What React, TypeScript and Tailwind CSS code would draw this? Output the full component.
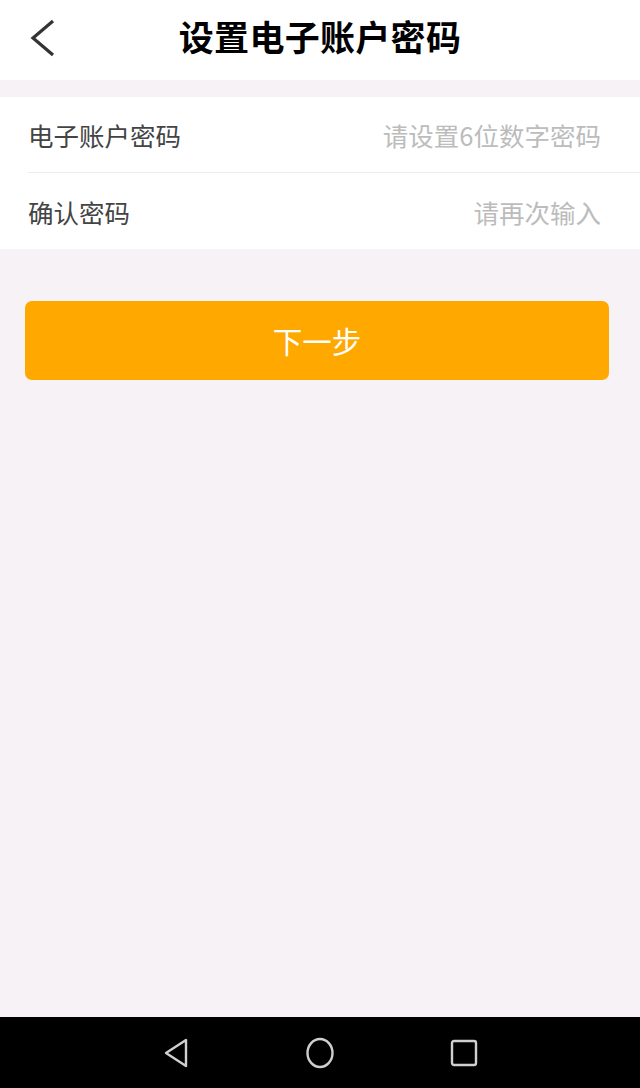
import React from "react";

const cjk = { fontFamily: '"Noto Sans CJK SC", "Noto Sans", sans-serif' };

function Row({ label, placeholder, divider }: { label: string; placeholder: string; divider?: boolean }) {
  return (
    <div className={`flex h-[76px] items-center justify-between ml-[28px] pr-[39px] pt-[2px] ${divider ? "border-b border-[#ececec]" : ""}`}>
      <span className="text-[25.5px] text-[#444444]">{label}</span>
      <input
        type="password"
        placeholder={placeholder}
        className="w-[320px] text-right text-[25.5px] outline-none bg-transparent placeholder:text-[#bcbcbc]"
        style={cjk}
      />
    </div>
  );
}

export default function App() {
  return (
    <div className="w-[640px] h-[1088px] flex flex-col bg-[#f7f2f6]" style={cjk}>
      {/* header */}
      <div className="relative h-[80px] bg-white flex items-center justify-center">
        <svg className="absolute left-[28px] top-[19px]" width="30" height="38" viewBox="0 0 30 38">
          <path d="M25 2 L5 19 L25 36" fill="none" stroke="#333" strokeWidth="3.2" />
        </svg>
        <h1 className="text-[35px] font-bold text-black tracking-[0.3px] -mt-[7px]">设置电子账户密码</h1>
      </div>

      {/* form */}
      <div className="mt-[17px] bg-white">
        <Row label="电子账户密码" placeholder="请设置6位数字密码" divider />
        <Row label="确认密码" placeholder="请再次输入" />
      </div>

      {/* button */}
      <div className="px-[25px] pt-[52px]">
        <button className="w-[584px] h-[79px] rounded-[7px] bg-[#ffa800] text-white text-[29.5px]">下一步</button>
      </div>

      <div className="flex-1" />

      {/* nav bar */}
      <div className="h-[71px] bg-black flex items-center justify-center gap-[115px]">
        <svg width="28" height="32" viewBox="0 0 28 32">
          <path d="M24 3 L24 29 L4 16 Z" fill="none" stroke="#cfcfcf" strokeWidth="2.4" strokeLinejoin="round" />
        </svg>
        <svg width="30" height="32" viewBox="0 0 30 32">
          <ellipse cx="15" cy="16" rx="12.5" ry="14" fill="none" stroke="#cfcfcf" strokeWidth="2.4" />
        </svg>
        <svg width="28" height="28" viewBox="0 0 28 28">
          <rect x="2" y="2" width="24" height="24" rx="2" fill="none" stroke="#cfcfcf" strokeWidth="2.4" />
        </svg>
      </div>
    </div>
  );
}
